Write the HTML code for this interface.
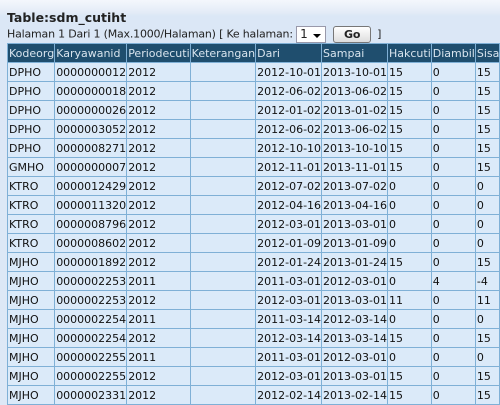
<!DOCTYPE html><html><head><style>
body{margin:0;width:500px;height:405px;overflow:hidden;background:linear-gradient(#f4f7fc 0,#e4ecf7 12px,#dbe7f6 16px,#dde8f6 100%);font-family:"DejaVu Sans","Liberation Sans",sans-serif;font-size:11px;color:#111}
.t{position:absolute;left:7px;top:10px;font-weight:bold;font-size:12.5px;color:#222}
.h{position:absolute;left:7px;top:26px;font-size:11px;color:#222;letter-spacing:-0.2px}
.sel{display:inline-block;height:17px;background:#fff;border:1px solid #99a;vertical-align:middle;position:relative;font-size:12px;line-height:15px;padding-left:3px;box-sizing:border-box;width:30px}
.sel:after{content:"";position:absolute;right:4px;top:7px;border:4px solid transparent;border-top:4px solid #000;border-bottom:0}
.go{display:inline-block;width:36px;height:15px;border:1px solid #777;border-radius:3px;background:linear-gradient(#fff,#ddd);font-weight:bold;text-align:center;line-height:15px;vertical-align:middle;margin-left:7px;margin-right:6px}
table{position:absolute;left:7px;top:43px;border-collapse:collapse;table-layout:fixed}
td,th{border:1px solid #7fb0d6;height:18px;padding:0 0 0 1px;white-space:nowrap;overflow:hidden;text-align:left;font-weight:normal;background:#dbeaf9;box-sizing:border-box}
tr{height:19px}
th{background:#1f4e6e;color:#d8e4ee}
</style></head><body>
<div class="t">Table:sdm_cutiht</div>
<div class="h">Halaman 1 Dari 1 (Max.1000/Halaman) [ Ke halaman: <span class="sel">1</span><span class="go">Go</span>]</div>
<table>
<colgroup><col style="width:49px"><col style="width:73px"><col style="width:64px"><col style="width:65px"><col style="width:69px"><col style="width:66px"><col style="width:43px"><col style="width:40px"><col style="width:23px"></colgroup>
<tr><th>Kodeorg</th><th>Karyawanid</th><th>Periodecuti</th><th>Keterangan</th><th>Dari</th><th>Sampai</th><th>Hakcuti</th><th>Diambil</th><th>Sisa</th></tr>
<tr><td>DPHO</td><td>0000000012</td><td>2012</td><td></td><td>2012-10-01</td><td>2013-10-01</td><td>15</td><td>0</td><td>15</td></tr>
<tr><td>DPHO</td><td>0000000018</td><td>2012</td><td></td><td>2012-06-02</td><td>2013-06-02</td><td>15</td><td>0</td><td>15</td></tr>
<tr><td>DPHO</td><td>0000000026</td><td>2012</td><td></td><td>2012-01-02</td><td>2013-01-02</td><td>15</td><td>0</td><td>15</td></tr>
<tr><td>DPHO</td><td>0000003052</td><td>2012</td><td></td><td>2012-06-02</td><td>2013-06-02</td><td>15</td><td>0</td><td>15</td></tr>
<tr><td>DPHO</td><td>0000008271</td><td>2012</td><td></td><td>2012-10-10</td><td>2013-10-10</td><td>15</td><td>0</td><td>15</td></tr>
<tr><td>GMHO</td><td>0000000007</td><td>2012</td><td></td><td>2012-11-01</td><td>2013-11-01</td><td>15</td><td>0</td><td>15</td></tr>
<tr><td>KTRO</td><td>0000012429</td><td>2012</td><td></td><td>2012-07-02</td><td>2013-07-02</td><td>0</td><td>0</td><td>0</td></tr>
<tr><td>KTRO</td><td>0000011320</td><td>2012</td><td></td><td>2012-04-16</td><td>2013-04-16</td><td>0</td><td>0</td><td>0</td></tr>
<tr><td>KTRO</td><td>0000008796</td><td>2012</td><td></td><td>2012-03-01</td><td>2013-03-01</td><td>0</td><td>0</td><td>0</td></tr>
<tr><td>KTRO</td><td>0000008602</td><td>2012</td><td></td><td>2012-01-09</td><td>2013-01-09</td><td>0</td><td>0</td><td>0</td></tr>
<tr><td>MJHO</td><td>0000001892</td><td>2012</td><td></td><td>2012-01-24</td><td>2013-01-24</td><td>15</td><td>0</td><td>15</td></tr>
<tr><td>MJHO</td><td>0000002253</td><td>2011</td><td></td><td>2011-03-01</td><td>2012-03-01</td><td>0</td><td>4</td><td>-4</td></tr>
<tr><td>MJHO</td><td>0000002253</td><td>2012</td><td></td><td>2012-03-01</td><td>2013-03-01</td><td>11</td><td>0</td><td>11</td></tr>
<tr><td>MJHO</td><td>0000002254</td><td>2011</td><td></td><td>2011-03-14</td><td>2012-03-14</td><td>0</td><td>0</td><td>0</td></tr>
<tr><td>MJHO</td><td>0000002254</td><td>2012</td><td></td><td>2012-03-14</td><td>2013-03-14</td><td>15</td><td>0</td><td>15</td></tr>
<tr><td>MJHO</td><td>0000002255</td><td>2011</td><td></td><td>2011-03-01</td><td>2012-03-01</td><td>0</td><td>0</td><td>0</td></tr>
<tr><td>MJHO</td><td>0000002255</td><td>2012</td><td></td><td>2012-03-01</td><td>2013-03-01</td><td>15</td><td>0</td><td>15</td></tr>
<tr><td>MJHO</td><td>0000002331</td><td>2012</td><td></td><td>2012-02-14</td><td>2013-02-14</td><td>15</td><td>0</td><td>15</td></tr>
</table>
</body></html>
